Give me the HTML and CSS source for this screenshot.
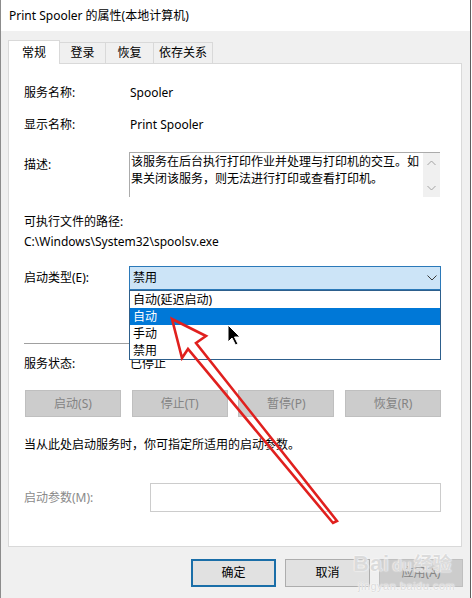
FILE: index.html
```html
<!DOCTYPE html>
<html lang="zh-CN">
<head>
<meta charset="utf-8">
<title>Print Spooler 的属性(本地计算机)</title>
<link rel="stylesheet" href="styles.css">
</head>
<body>
<div class="window">
  <div class="titlebar">Print Spooler 的属性(本地计算机)</div>
  <div class="dialog">
    <div class="tabs">
      <div class="tab active">常规</div>
      <div class="tab">登录</div>
      <div class="tab">恢复</div>
      <div class="tab">依存关系</div>
    </div>
    <div class="panel">
      <div class="row first"><span class="label">服务名称:</span><span class="value">Spooler</span></div>
      <div class="row gap16"><span class="label">显示名称:</span><span class="value">Print Spooler</span></div>
      <div class="row desc-row">
        <span class="label desc-label">描述:</span>
        <div class="desc">
          <div class="desc-text">该服务在后台执行打印作业并处理与打印机的交互。如<br>果关闭该服务，则无法进行打印或查看打印机。</div>
          <div class="scrollbar">
            <svg class="sb-arrow" width="9" height="6" viewBox="0 0 9 6"><path d="M0.5 5 L4.5 1 L8.5 5" fill="none" stroke="#a3a3a3" stroke-width="1"/></svg>
            <svg class="sb-arrow" width="9" height="6" viewBox="0 0 9 6"><path d="M0.5 1 L4.5 5 L8.5 1" fill="none" stroke="#a3a3a3" stroke-width="1"/></svg>
          </div>
        </div>
      </div>
      <div class="plain path-label">可执行文件的路径:</div>
      <div class="plain path">C:\Windows\System32\spoolsv.exe</div>
      <div class="row combo-row">
        <span class="label">启动类型(E):</span>
        <div class="combo">
          <span class="combo-value">禁用</span>
          <svg class="chevron" width="10" height="6" viewBox="0 0 10 6"><path d="M0.5 0.5 L5 5 L9.5 0.5" fill="none" stroke="#3a3a3a" stroke-width="1"/></svg>
          <ul class="dropdown">
            <li>自动(延迟启动)</li>
            <li class="selected">自动</li>
            <li>手动</li>
            <li>禁用</li>
          </ul>
        </div>
      </div>
      <div class="sep"></div>
      <div class="row status-row"><span class="label">服务状态:</span><span class="value">已停止</span></div>
      <div class="svc-buttons">
        <div class="btn disabled">启动(S)</div>
        <div class="btn disabled">停止(T)</div>
        <div class="btn disabled">暂停(P)</div>
        <div class="btn disabled">恢复(R)</div>
      </div>
      <div class="plain hint">当从此处启动服务时，你可指定所适用的启动参数。</div>
      <div class="param-row">
        <span class="label muted">启动参数(M):</span>
        <div class="param-input"></div>
      </div>
    </div>
    <div class="footer">
      <div class="btn default">确定</div>
      <div class="btn">取消</div>
      <div class="btn disabled">应用(A)</div>
    </div>
  </div>

  <div class="watermark">
    <div class="wm-main"><span class="wm-bai">Bai</span><span class="wm-du">du</span><span class="wm-jy">经验</span></div>
    <div class="wm-url">jingyan.baidu.com</div>
  </div>

  <svg class="overlay" width="472" height="598" viewBox="0 0 472 598">
    <polygon points="172,319 206,336 196,343 337,521 333,523 188,349 182,358" fill="none" stroke="#e0201e" stroke-width="2.6" stroke-linejoin="miter"/>
    <path d="M228 325 L228 342 L232 338 L235.5 345 L238 344 L234.5 337 L240 337 Z" fill="#000" stroke="#fff" stroke-width="1"/>
  </svg>
</div>
</body>
</html>
```

FILE: styles.css
```css
* {
  box-sizing: border-box;
}

html,
body {
  margin: 0;
  padding: 0;
}

body {
  width: 472px;
  height: 598px;
  overflow: hidden;
  background: #ffffff;
  font-family: "Noto Sans", "Noto Sans CJK SC", sans-serif;
  font-size: 12px;
  line-height: 16px;
  color: #000;
}

.window {
  position: relative;
  width: 471px;
  height: 598px;
  background: #f0f0f0;
  border-left: 1px solid #8c8c8c;
  border-right: 1px solid #5e5e5e;
  overflow: hidden;
}

.titlebar {
  height: 31px;
  line-height: 31px;
  background: #ffffff;
  padding-left: 8px;
  font-size: 12px;
  color: #000;
}

.dialog {
  padding: 9px 8px 0 7px;
}

.tabs {
  display: flex;
  align-items: flex-end;
  height: 23px;
}

.tab {
  height: 21px;
  line-height: 20px;
  padding: 0;
  text-align: center;
  white-space: nowrap;
  border: 1px solid #d9d9d9;
  border-bottom: none;
  border-left: none;
  background: #f0f0f0;
}

.tab:nth-child(2) {
  width: 46px;
}

.tab:nth-child(3) {
  width: 48px;
}

.tab:nth-child(4) {
  width: 59px;
}

.tab.active {
  position: relative;
  z-index: 1;
  width: 52px;
  height: 24px;
  line-height: 23px;
  margin-bottom: -1px;
  background: #ffffff;
  border-left: 1px solid #d9d9d9;
}

.panel {
  width: 454px;
  background: #ffffff;
  border: 1px solid #d9d9d9;
  padding: 21px 20px 34px 15px;
}

.row {
  display: grid;
  grid-template-columns: 106px 1fr;
  align-items: center;
}

.row.first {
  margin-top: 0;
}

.gap16 {
  margin-top: 16px;
}

.desc-row {
  margin-top: 19px;
  align-items: start;
  grid-template-columns: 105px 1fr;
}

.desc-label {
  padding-top: 5px;
}

.desc {
  display: flex;
  height: 45px;
  width: 311px;
  border-top: 1px solid #ababab;
  border-left: 1px solid #ababab;
}

.desc-text {
  flex: 1;
  padding: 0 0 0 1px;
  line-height: 17px;
  white-space: nowrap;
}

.scrollbar {
  width: 17px;
  background: #f0f0f0;
  display: flex;
  flex-direction: column;
  align-items: center;
  justify-content: space-between;
  padding: 7px 0 6px;
}

.plain {
  line-height: 16px;
}

.path-label {
  margin-top: 17px;
}

.path {
  margin-top: 4px;
}

.combo-row {
  margin-top: 16px;
  grid-template-columns: 105px 1fr;
}

.combo {
  position: relative;
  width: 312px;
  height: 24px;
  background: #cce4f7;
  border: 1px solid #2b79b9;
  display: flex;
  align-items: center;
  padding-left: 3px;
}

.combo-value {
  flex: 1;
}

.chevron {
  margin-right: 3px;
}

.dropdown {
  position: absolute;
  top: 23px;
  left: -1px;
  z-index: 5;
  width: 312px;
  margin: 0;
  padding: 0;
  list-style: none;
  background: #ffffff;
  border: 1px solid #2d5f8c;
}

.dropdown li {
  height: 17px;
  line-height: 17px;
  padding-left: 3px;
}

.dropdown li.selected {
  background: #0078d7;
  color: #ffffff;
}

.sep {
  margin-top: 53px;
  height: 1px;
  width: 416px;
  background: #a0a0a0;
}

.status-row {
  margin-top: 12px;
}

.svc-buttons {
  margin-top: 18px;
  margin-left: 1px;
  width: 416px;
  display: flex;
  justify-content: space-between;
}

.svc-buttons .btn {
  width: 96px;
  height: 27px;
}

.btn {
  display: flex;
  align-items: center;
  justify-content: center;
  width: 85px;
  height: 28px;
  background: #e1e1e1;
  border: 1px solid #adadad;
  color: #000;
}

.btn.disabled {
  background: #cccccc;
  border-color: #bfbfbf;
  color: #838383;
}

.btn.default {
  border: 2px solid #1a6ea8;
}

.hint {
  margin-top: 20px;
}

.param-row {
  margin-top: 30px;
  display: grid;
  grid-template-columns: 126px 291px;
  align-items: center;
}

.muted {
  color: #8a8a8a;
}

.param-input {
  height: 29px;
  border: 1px solid #cccccc;
  background: #ffffff;
}

.footer {
  margin-top: 12px;
  display: flex;
  justify-content: flex-end;
  gap: 9px;
  padding-right: 0;
  width: 455px;
}

.footer .btn.disabled {
  width: 84px;
}

.watermark {
  position: absolute;
  left: 352px;
  top: 551px;
  width: 100px;
  color: rgba(210, 210, 210, 0.8);
  text-shadow: 0 0 1px #ffffff, 0 0 2px #ffffff;
  pointer-events: none;
}

.wm-main {
  display: flex;
  align-items: baseline;
  font-family: "Liberation Sans", "Noto Sans CJK SC", sans-serif;
  font-weight: bold;
  line-height: 24px;
}

.wm-bai {
  font-size: 22px;
  letter-spacing: 1px;
}

.wm-du {
  font-size: 16px;
  margin-left: 2px;
}

.wm-jy {
  font-size: 19px;
  margin-left: 2px;
  font-family: "Noto Sans CJK SC", sans-serif;
}

.wm-url {
  font-family: "Liberation Sans", sans-serif;
  font-size: 11px;
  line-height: 12px;
  letter-spacing: 0.5px;
  margin-left: 5px;
  margin-top: 2px;
}

.overlay {
  position: absolute;
  top: 0;
  left: -1px;
  z-index: 10;
  pointer-events: none;
}
```
